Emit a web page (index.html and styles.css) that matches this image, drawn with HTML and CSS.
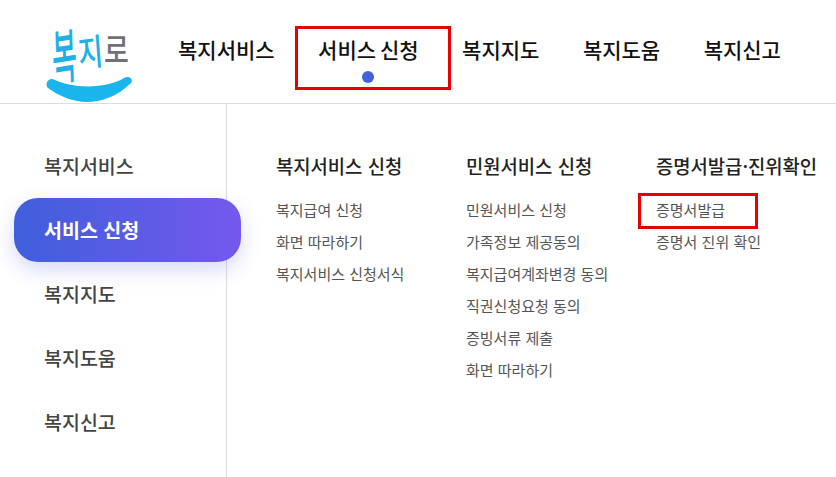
FILE: index.html
```html
<!DOCTYPE html>
<html lang="ko">
<head>
  <meta charset="UTF-8" />
  <title>복지로</title>
  <link rel="stylesheet" href="styles.css">
</head>
<body>

  <!-- Header -->
  <header class="header">
    <a class="logo" href="#">
      <span class="logo-text"><span class="logo-bok">복</span><span class="logo-ji">지</span><span class="logo-ro">로</span></span>
      <svg class="logo-smile" width="90" height="28" viewBox="0 0 90 28">
        <path d="M9 4.5 C 25 13, 60 15, 80 2.5 C 84 0.5, 89 4, 86 8 C 72 22, 55 27, 42 27 C 28 27, 12 20, 3 13 C -1 9, 4 2, 9 4.5 Z" fill="#19b5ec"/>
      </svg>
    </a>
    <nav class="nav">
      <a href="#">복지서비스</a>
      <a class="nav-active" href="#">서비스 신청</a>
      <a href="#">복지지도</a>
      <a href="#">복지도움</a>
      <a href="#">복지신고</a>
    </nav>
  </header>

  <!-- Menu -->
  <div class="menu">
    <ul class="side">
      <li>복지서비스</li>
      <li class="side-active">서비스 신청</li>
      <li>복지지도</li>
      <li>복지도움</li>
      <li>복지신고</li>
    </ul>

    <div class="columns">
      <div class="col">
        <h3>복지서비스 신청</h3>
        <a href="#">복지급여 신청</a>
        <a href="#">화면 따라하기</a>
        <a href="#">복지서비스 신청서식</a>
      </div>
      <div class="col">
        <h3>민원서비스 신청</h3>
        <a href="#">민원서비스 신청</a>
        <a href="#">가족정보 제공동의</a>
        <a href="#">복지급여계좌변경 동의</a>
        <a href="#">직권신청요청 동의</a>
        <a href="#">증빙서류 제출</a>
        <a href="#">화면 따라하기</a>
      </div>
      <div class="col">
        <h3>증명서발급·진위확인</h3>
        <a class="marked" href="#">증명서발급</a>
        <a href="#">증명서 진위 확인</a>
      </div>
    </div>
  </div>

</body>
</html>
```

FILE: styles.css
```css
*, *::before, *::after {
  box-sizing: border-box;
}

body {
  margin: 0;
  height: 477px;
  overflow: hidden;
  background: #fff;
  color: #333;
  font-family: "Noto Sans CJK KR", "Noto Sans", sans-serif;
}

a {
  color: inherit;
  text-decoration: none;
}

.header {
  display: flex;
  height: 104px;
  border-bottom: 1px solid #ddd;
}

.logo {
  position: relative;
  width: 178px;
  flex-shrink: 0;
}

.logo-text {
  position: absolute;
  left: 52px;
  top: 21px;
  display: flex;
  font-size: 27px;
  line-height: 60px;
  font-weight: 500;
  white-space: nowrap;
}

.logo-bok, .logo-ji, .logo-ro {
  display: block;
  width: 26px;
}

.logo-bok {
  color: #1fb1e6;
  transform: translateY(3px) scaleY(2.2) rotate(-4deg);
}

.logo-ji {
  color: #1fb1e6;
  transform: scaleY(1.35) rotate(-6deg);
}

.logo-ro {
  color: #6f7178;
  transform: translateY(-2px) scaleY(1.25);
}

.logo-smile {
  position: absolute;
  left: 45px;
  top: 75px;
}

.nav {
  display: flex;
  gap: 43.5px;
}

.nav a {
  position: relative;
  padding-top: 31px;
  font-size: 21px;
  line-height: 36px;
  font-weight: 500;
  word-spacing: -2px;
  color: #111;
  white-space: nowrap;
}

/* blue dot under the open menu */
.nav-active::before {
  content: "";
  position: absolute;
  left: 50%;
  top: 71px;
  width: 12px;
  height: 12px;
  margin-left: -6px;
  border-radius: 50%;
  background: #4361dc;
}

/* red marker box */
.nav-active::after {
  content: "";
  position: absolute;
  left: -23px;
  right: -32px;
  top: 26px;
  height: 64px;
  border: 3px solid #e60000;
}

.menu {
  display: flex;
  height: 373px;
}

.side {
  width: 227px;
  flex-shrink: 0;
  margin: 0;
  padding: 30px 0 0;
  list-style: none;
  border-right: 1px solid #ddd;
}

.side li {
  width: 227px;
  height: 64px;
  margin-left: 14px;
  padding-left: 30px;
  font-size: 19.5px;
  line-height: 64px;
  font-weight: 500;
  color: #444;
}

.side .side-active {
  border-radius: 24px;
  background: linear-gradient(90deg, #3f5fdb, #7558ee);
  box-shadow: 0 8px 20px rgba(70, 80, 220, 0.22);
  color: #fff;
  font-weight: 700;
}

.columns {
  display: flex;
  padding: 45px 0 0 49px;
}

.col {
  display: flex;
  flex-direction: column;
  width: 190px;
  flex-shrink: 0;
}

.col h3 {
  margin: 0 0 11px;
  font-size: 18.8px;
  line-height: 34px;
  font-weight: 500;
  color: #222;
  white-space: nowrap;
}

.col a {
  height: 32px;
  font-size: 15px;
  line-height: 32px;
  color: #555;
  white-space: nowrap;
}

.marked {
  position: relative;
}

.marked::after {
  content: "";
  position: absolute;
  left: -18px;
  top: -1px;
  width: 120px;
  height: 36px;
  border: 3px solid #e60000;
}
```
